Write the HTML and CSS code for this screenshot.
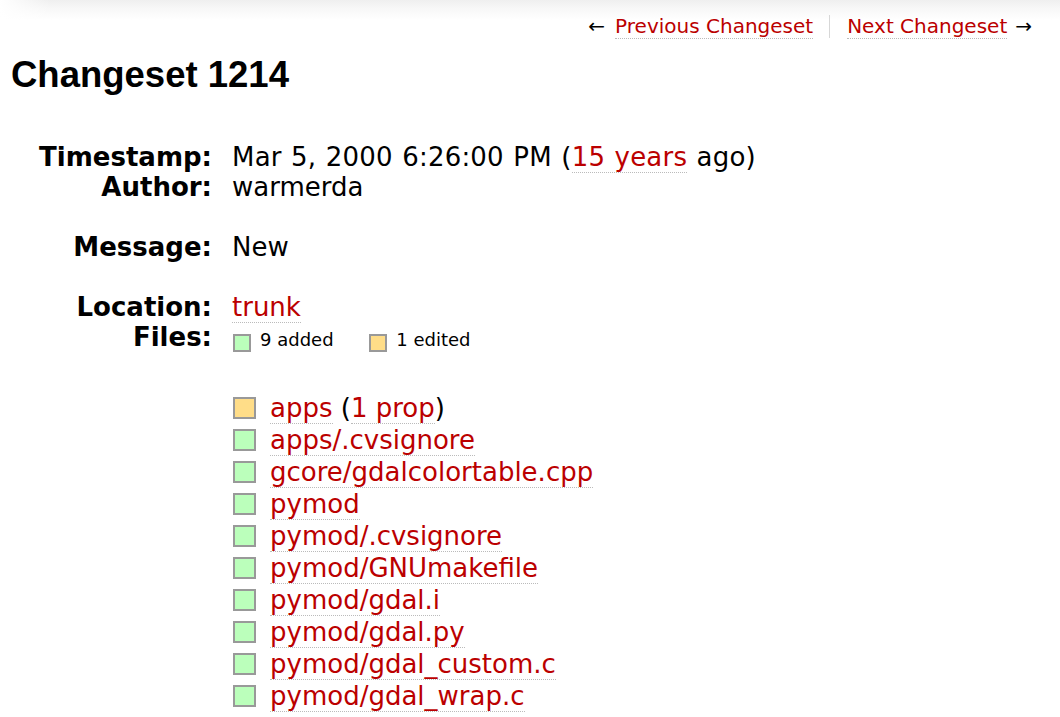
FILE: index.html
```html
<!DOCTYPE html>
<html lang="en">
<head>
<meta charset="utf-8">
<title>Changeset 1214</title>
<link rel="stylesheet" href="styles.css">
</head>
<body>
<div class="page">
  <nav class="ctxtnav">
    <span class="navitem"><span class="arrow left">←</span><a href="#">Previous Changeset</a></span>
    <span class="navitem sep"><a href="#">Next Changeset</a><span class="arrow right">→</span></span>
  </nav>
  <h1 class="title">Changeset 1214</h1>
  <dl class="overview">
    <dt class="label">Timestamp:</dt>
    <dd class="value stamp">Mar 5, 2000 6:26:00 PM (<a href="#">15 years</a> ago)</dd>
    <dt class="label">Author:</dt>
    <dd class="value">warmerda</dd>
    <dt class="label spaced">Message:</dt>
    <dd class="value spaced">New</dd>
    <dt class="label">Location:</dt>
    <dd class="value"><a href="#">trunk</a></dd>
    <dt class="label">Files:</dt>
    <dd class="value files">
      <div class="legend">
        <span class="lg"><span class="sq add"></span>9 added</span>
        <span class="lg second"><span class="sq mod"></span>1 edited</span>
      </div>
      <ul class="filelist">
        <li class="entry"><span class="chg mod"></span><span class="name"><a href="#">apps</a> (<a href="#">1 prop</a>)</span></li>
        <li class="entry"><span class="chg add"></span><span class="name"><a href="#">apps/.cvsignore</a></span></li>
        <li class="entry"><span class="chg add"></span><span class="name"><a href="#">gcore/gdalcolortable.cpp</a></span></li>
        <li class="entry"><span class="chg add"></span><span class="name"><a href="#">pymod</a></span></li>
        <li class="entry"><span class="chg add"></span><span class="name"><a href="#">pymod/.cvsignore</a></span></li>
        <li class="entry"><span class="chg add"></span><span class="name"><a href="#">pymod/GNUmakefile</a></span></li>
        <li class="entry"><span class="chg add"></span><span class="name"><a href="#">pymod/gdal.i</a></span></li>
        <li class="entry"><span class="chg add"></span><span class="name"><a href="#">pymod/gdal.py</a></span></li>
        <li class="entry"><span class="chg add"></span><span class="name"><a href="#">pymod/gdal_custom.c</a></span></li>
        <li class="entry"><span class="chg add"></span><span class="name"><a href="#">pymod/gdal_wrap.c</a></span></li>
      </ul>
    </dd>
  </dl>
</div>
</body>
</html>
```
FILE: styles.css
```css
html {
  background:
    linear-gradient(to right, #fff 0, rgba(255,255,255,0) 50px) top left / 50px 20px no-repeat,
    linear-gradient(to bottom, #efefef 0, #f7f7f7 8px, #fff 20px) top left / 100% 20px no-repeat,
    #fff;
}
body {
  margin: 0;
  font-family: "DejaVu Sans", Verdana, sans-serif;
  color: #000;
}
.page {
  padding: 0 0 0 10px;
}
a {
  color: #b00;
  text-decoration: none;
  border-bottom: 1px dotted #bbb;
}
.ctxtnav {
  display: flex;
  justify-content: flex-end;
  margin-top: 15px;
  padding-right: 28px;
  font-size: 20px;
  line-height: 23px;
}
.navitem {
  padding-right: 16px;
}
.navitem.sep {
  border-left: 1px solid #d7d7d7;
  padding-left: 17px;
  padding-right: 0;
}
.arrow.left {
  margin-right: 10px;
}
.arrow.right {
  margin-left: 8px;
}
.title {
  margin: 16px 0 0 1px;
  font-family: "Liberation Sans", Arial, sans-serif;
  font-weight: bold;
  font-size: 36.5px;
  line-height: 41px;
}
.overview {
  display: grid;
  grid-template-columns: 202px 1fr;
  column-gap: 20px;
  margin: 47px 0 0 0;
  font-size: 26px;
  line-height: 30px;
}
.label {
  font-weight: bold;
  text-align: right;
  margin: 0;
}
.value {
  margin: 0;
}
.stamp {
  word-spacing: 1px;
  letter-spacing: 0.2px;
}
.spaced {
  margin: 30px 0;
}
.legend {
  padding-top: 3px;
  line-height: 30px;
  font-size: 18px;
  margin-left: 1px;
}
.lg.second {
  margin-left: 30px;
}
.sq {
  display: inline-block;
  box-sizing: border-box;
  width: 18px;
  height: 18px;
  border: 2px solid #999;
  vertical-align: -6px;
  margin-right: 9px;
}
.add { background: #bfb; }
.mod { background: #fd8; }
.filelist {
  list-style: none;
  margin: 37px 0 0 0;
  padding: 0;
}
.entry {
  display: flex;
  align-items: center;
  height: 32px;
  line-height: 32px;
}
.chg {
  box-sizing: border-box;
  width: 23px;
  height: 22px;
  border: 2px solid #999;
  margin: 0 14px 0 1px;
  flex: none;
}
```
